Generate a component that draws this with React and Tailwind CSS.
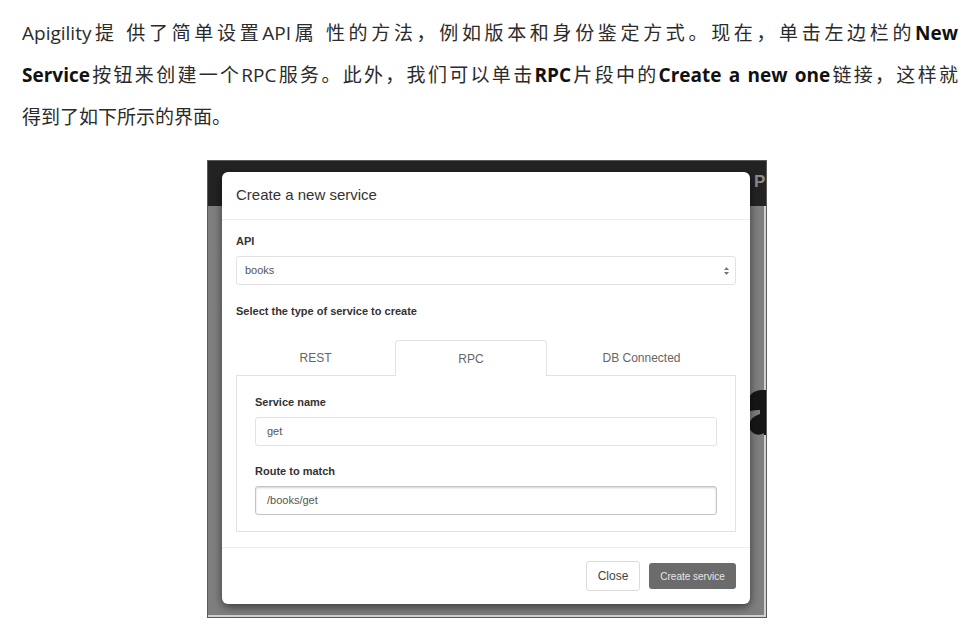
import React from 'react';

const CJK = "font-['Open_Sans','Noto_Sans_CJK_SC',sans-serif]";
const UI = "font-['Liberation_Sans',Arial,sans-serif]";

const Field = ({ label, value, focused = false }) => (
  <div>
    <p className="text-[11px] font-bold leading-[14px] text-[#333]">{label}</p>
    <div
      className={
        focused
          ? 'mt-[8px] flex h-[29px] items-center rounded-[3px] border border-[#c4c4c4] px-[11px] text-[11px] text-[#555] shadow-[inset_0_1px_2px_rgba(0,0,0,0.18)]'
          : 'mt-[8px] flex h-[29px] items-center rounded-[3px] border border-[#e2e2e2] px-[11px] text-[11px] text-[#555]'
      }
    >
      {value}
    </div>
  </div>
);

const Tab = ({ label, width, active }) => (
  <div
    className={
      active
        ? 'relative z-10 -mb-px flex h-[36px] items-center justify-center rounded-t-[4px] border border-b-0 border-[#e2e2e2] bg-white text-[12px] text-[#666]'
        : 'flex h-[35px] items-center justify-center text-[12px] text-[#666]'
    }
    style={{ width }}
  >
    {label}
  </div>
);

const Modal = () => (
  <div className={`absolute left-[14px] top-[11px] flex h-[432px] w-[528px] flex-col rounded-[6px] bg-white shadow-[0_3px_10px_rgba(0,0,0,0.55)] ${UI}`}>
    <div className="flex h-[48px] items-center border-b border-[#ececec] px-[14px]">
      <h2 className="text-[15px] text-[#333]">Create a new service</h2>
    </div>

    <div className="border-b border-[#ececec] px-[14px] pb-[15px] pt-[14px]">
      <p className="text-[11px] font-bold leading-[14px] text-[#333]">API</p>
      <div className="mt-[8px] flex h-[29px] items-center justify-between rounded-[3px] border border-[#e2e2e2] pl-[8px] pr-[5px] text-[11px] text-[#555]">
        <span>books</span>
        <svg width="7" height="10" viewBox="0 0 7 10">
          <path d="M3.5 1 L6 4 L1 4 Z" fill="#777" />
          <path d="M3.5 9 L6 6 L1 6 Z" fill="#777" />
        </svg>
      </div>

      <p className="mt-[19px] text-[11px] font-bold leading-[14px] text-[#333]">
        Select the type of service to create
      </p>

      <div className="mt-[22px] flex">
        <Tab label="REST" width={159} />
        <Tab label="RPC" width={152} active />
        <Tab label="DB Connected" width={189} />
      </div>
      <div className="flex flex-col gap-[18px] border border-[#e2e2e2] px-[18px] pb-[16px] pt-[19px]">
        <Field label="Service name" value="get" />
        <Field label="Route to match" value="/books/get" focused />
      </div>
    </div>

    <div className="flex flex-1 items-center justify-end gap-[9px] px-[14px]">
      <button
        type="button"
        className="h-[30px] w-[54px] rounded-[3px] border border-[#dcdcdc] bg-white text-[12px] text-[#444]"
      >
        Close
      </button>
      <button
        type="button"
        className="h-[26px] w-[87px] rounded-[3px] bg-[#6b6b6b] text-[10px] text-[#e6e6e6]"
      >
        Create service
      </button>
    </div>
  </div>
);

const Screenshot = () => (
  <div className="relative mx-auto mt-[159px] h-[458px] w-[560px] overflow-hidden border border-[#5a5a5a] bg-[#7f7f7f] shadow-[inset_-2px_-2px_0_#d0d0d0]">
    <div className="h-[45px] bg-[#232323]" />
    <span className={`absolute left-[546px] top-[8px] text-[17px] font-bold text-[#8a8a8a] ${UI}`}>P</span>
    {/* part of the page logo, mostly hidden behind the dialog */}
    <svg className="absolute left-[538px] top-[228px]" width="22" height="48" viewBox="0 0 22 48">
      <path
        d="M2 14 C2 6 8 1 16 1 L22 1 L22 46 L18 46 C18 44 17 44 16 45 C14 46 11 46 9 45 C4 43 2 38 4 33 C6 28 11 26 14 25 L14 21 C12 21 8 21 4 22 Z"
        fill="#161616"
      />
    </svg>
    <Modal />
  </div>
);

export default function App() {
  return (
    <div className="relative min-h-[634px] w-[974px] overflow-hidden bg-white pt-px">
      <div className={`absolute left-[22px] top-[12px] w-[936px] text-[19px] leading-[42px] text-[#2b2b2b] ${CJK}`}>
        <p className="whitespace-nowrap [text-align-last:justify]">
          Apigility提 供了简单设置API属 性的方法，例如版本和身份鉴定方式。现在，单击左边栏的
          <b className="text-[#111]">New</b>
        </p>
        <p className="whitespace-nowrap [text-align-last:justify]">
          <b className="text-[#111]">Service</b>按钮来创建一个RPC服务。此外，我们可以单击
          <b className="text-[#111]">RPC</b>片段中的<b className="text-[#111]">Create a new one</b>链接，这样就
        </p>
        <p>得到了如下所示的界面。</p>
      </div>
      <Screenshot />
    </div>
  );
}
